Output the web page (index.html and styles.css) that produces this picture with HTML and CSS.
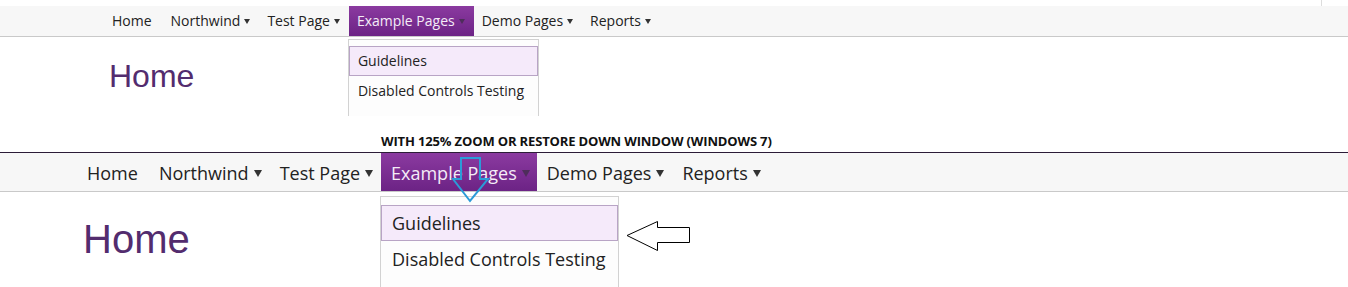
FILE: index.html
```html
<!DOCTYPE html>
<html lang="en">
<head>
<meta charset="utf-8">
<title>Menu zoom comparison</title>
<link rel="stylesheet" href="styles.css">
</head>
<body>
<div class="page">
  <div class="topgap"><span class="tick"></span></div>
  <nav class="nav nav-a">
    <ul class="menu">
      <li class="item item-home"><span>Home</span></li>
      <li class="item"><span>Northwind</span><i class="caret"></i></li>
      <li class="item"><span>Test Page</span><i class="caret"></i></li>
      <li class="item active"><span>Example Pages</span><i class="caret"></i>
        <ul class="dropdown">
          <li class="ditem hover">Guidelines</li>
          <li class="ditem">Disabled Controls Testing</li>
        </ul>
      </li>
      <li class="item"><span>Demo Pages</span><i class="caret"></i></li>
      <li class="item"><span>Reports</span><i class="caret"></i></li>
    </ul>
  </nav>
  <h1 class="title title-a">Home</h1>

  <p class="caption">WITH 125% ZOOM OR RESTORE DOWN WINDOW (WINDOWS 7)</p>

  <nav class="nav nav-b">
    <ul class="menu">
      <li class="item item-home"><span>Home</span></li>
      <li class="item"><span>Northwind</span><i class="caret"></i></li>
      <li class="item"><span>Test Page</span><i class="caret"></i></li>
      <li class="item active"><span>Example Pages</span><i class="caret"></i>
        <ul class="dropdown">
          <li class="ditem hover">Guidelines</li>
          <li class="ditem">Disabled Controls Testing</li>
        </ul>
      </li>
      <li class="item"><span>Demo Pages</span><i class="caret"></i></li>
      <li class="item"><span>Reports</span><i class="caret"></i></li>
    </ul>
  </nav>
  <h1 class="title title-b">Home</h1>

  <svg class="annotations" width="1348" height="287" viewBox="0 0 1348 287" aria-hidden="true">
    <polygon class="arrow-blue" points="461,158 480,158 480,179 488,179 470,201 453,179 461,179"/>
    <polygon class="arrow-black" points="627,235.5 657.5,221.5 657.5,227.5 689.5,227.5 689.5,242.5 657.5,242.5 657.5,250.5"/>
  </svg>
</div>
</body>
</html>
```

FILE: styles.css
```css
html, body {
  margin: 0;
  padding: 0;
  background: #ffffff;
}

.page {
  position: relative;
  width: 1348px;
  height: 287px;
  overflow: hidden;
  font-family: "Open Sans", "Noto Sans", sans-serif;
  color: #222222;
}

.topgap {
  height: 6px;
  display: flex;
  justify-content: flex-end;
}

.tick {
  width: 1px;
  height: 6px;
  background: #dddddd;
  margin-right: 26px;
}

.nav {
  background: #f7f7f7;
  border-bottom: 1px solid #c9c9c9;
}

.menu {
  list-style: none;
  margin: 0;
  padding: 0;
  display: flex;
}

.item {
  position: relative;
  display: flex;
  align-items: center;
  color: #222222;
}

.caret {
  display: inline-block;
  width: 0;
  height: 0;
  border-style: solid;
  border-color: #333333 transparent transparent transparent;
}

.item.active {
  background: linear-gradient(#8b3aa0, #6c2385);
  color: #f4ecf7;
}

.item.active .caret {
  border-top-color: #4e2d5b;
}

/* ---- first (100%) menu ---- */
.nav-a .menu {
  padding-left: 104px;
}

.nav-a .item {
  height: 30px;
  line-height: 30px;
  font-size: 14px;
  padding: 0 9px 0 8px;
}

.nav-a .item-home {
  padding-right: 11px;
}

.nav-a .caret {
  margin-left: 4px;
  border-width: 5px 3.5px 0 3.5px;
}

.nav-a .dropdown {
  top: 33px;
  left: -1px;
  width: 189px;
  padding: 6px 0 10px;
}

.nav-a .ditem {
  font-size: 14px;
  height: 30px;
  line-height: 30px;
  padding-left: 9px;
}

.nav-a .ditem.hover {
  height: 28px;
  line-height: 28px;
  padding-left: 8px;
}

/* ---- dropdowns ---- */
.dropdown {
  position: absolute;
  list-style: none;
  margin: 0;
  background: #fdfdfd;
  border: 1px solid #d2d2d2;
  border-bottom: none;
  color: #222222;
  white-space: nowrap;
}

.ditem.hover {
  background: #f5eafa;
  border: 1px solid #b8a4c5;
}

/* ---- heading ---- */
.title {
  margin: 0;
  font-family: "Liberation Sans", Arial, sans-serif;
  font-weight: normal;
  color: #532c6e;
}

.title-a {
  margin-top: 23px;
  padding-left: 109px;
  font-size: 32px;
  line-height: 32px;
}

.caption {
  margin: 41px 0 3px;
  padding-left: 381px;
  font-size: 13px;
  line-height: 16px;
  font-weight: 700;
  letter-spacing: -0.15px;
  color: #111111;
}

/* ---- second (125%) menu ---- */
.nav-b {
  border-top: 1px solid #2c1c38;
}

.nav-b .menu {
  padding-left: 77px;
}

.nav-b .item {
  height: 38px;
  box-sizing: border-box;
  padding: 3px 8px 0 10px;
  line-height: 35px;
  font-size: 18px;
}

.nav-b .item-home {
  padding-right: 11px;
}

.nav-b .item.active {
  padding-right: 7px;
}

.nav-b .caret {
  margin-left: 5px;
  border-width: 7px 4px 0 4px;
}

.nav-b .dropdown {
  top: 43px;
  left: -1px;
  width: 237px;
  padding: 8px 0 20px;
}

.nav-b .ditem {
  font-size: 18px;
  height: 36px;
  line-height: 36px;
  padding-left: 11px;
}

.nav-b .ditem.hover {
  height: 34px;
  line-height: 34px;
  padding-left: 10px;
}

.title-b {
  margin-top: 27px;
  padding-left: 83px;
  font-size: 40px;
  line-height: 40px;
}

/* ---- annotation arrows drawn over the screenshot ---- */
.annotations {
  position: absolute;
  left: 0;
  top: 0;
  pointer-events: none;
}

.arrow-blue {
  fill: none;
  stroke: #2b9bd8;
  stroke-width: 2;
  stroke-linejoin: miter;
}

.arrow-black {
  fill: #ffffff;
  stroke: #000000;
  stroke-width: 1;
}
```
